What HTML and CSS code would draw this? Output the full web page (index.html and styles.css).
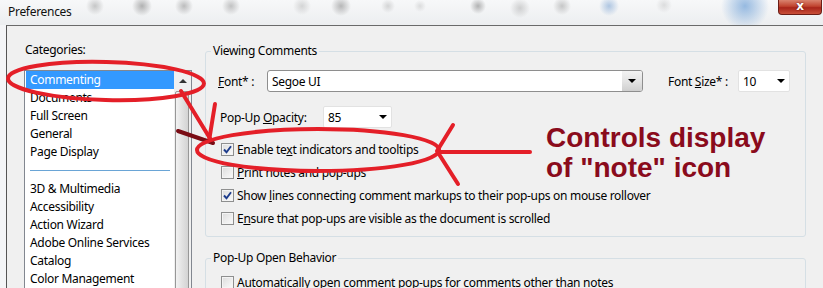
FILE: index.html
```html
<!DOCTYPE html>
<html lang="en">
<head>
    <meta charset="UTF-8">
    <meta name="viewport" content="width=device-width, initial-scale=1.0">
    <title>Preferences</title>
    <link rel="stylesheet" href="styles.css">
</head>
<body>
<div class="window">
    <div class="titlebar">
        <span class="title">Preferences</span>
        <div class="close">x</div>
    </div>

    <div class="dialog">
        <div class="left-pane">
            <div class="cat-label">Categories:</div>
            <div class="listbox">
                <ul class="cat-list">
                    <li class="selected">Commenting</li>
                    <li>Documents</li>
                    <li>Full Screen</li>
                    <li>General</li>
                    <li>Page Display</li>
                    <li class="sep"></li>
                    <li>3D &amp; Multimedia</li>
                    <li>Accessibility</li>
                    <li>Action Wizard</li>
                    <li>Adobe Online Services</li>
                    <li>Catalog</li>
                    <li>Color Management</li>
                </ul>
                <div class="scrollbar">
                    <div class="sb-up"><i class="up-arrow"></i></div>
                    <div class="sb-thumb"></div>
                </div>
            </div>
        </div>

        <div class="right-pane">
            <fieldset class="group">
                <legend>Viewing Comments</legend>
                <div class="row row-font">
                    <label class="lbl lbl-font"><u>F</u>ont* :</label>
                    <div class="combo combo-font">
                        <span class="value">Segoe UI</span>
                        <span class="drop"><i class="arrow"></i></span>
                    </div>
                    <label class="lbl lbl-size">Font <u>S</u>ize* :</label>
                    <div class="combo combo-flat combo-size">
                        <span class="value">10</span>
                        <i class="arrow"></i>
                    </div>
                </div>
                <div class="row row-opacity">
                    <label class="lbl lbl-opacity">Pop-Up <u>O</u>pacity:</label>
                    <div class="combo combo-flat combo-opacity">
                        <span class="value">85</span>
                        <i class="arrow"></i>
                    </div>
                </div>
                <ul class="checks">
                    <li><span class="box"><svg width="9" height="9" viewBox="0 0 9 9"><path d="M1 4.5 L3.5 7.2 L8 1.2" fill="none" stroke="#1d3c8c" stroke-width="1.9"/></svg></span><span>Enable te<u>x</u>t indicators and tooltips</span></li>
                    <li><span class="box"></span><span><u>P</u>rint notes and pop-ups</span></li>
                    <li><span class="box"><svg width="9" height="9" viewBox="0 0 9 9"><path d="M1 4.5 L3.5 7.2 L8 1.2" fill="none" stroke="#1d3c8c" stroke-width="1.9"/></svg></span><span>Show <u>l</u>ines connecting comment markups to their pop-ups on mouse rollover</span></li>
                    <li><span class="box"></span><span>E<u>n</u>sure that pop-ups are visible as the document is scrolled</span></li>
                </ul>
            </fieldset>

            <fieldset class="group group-open">
                <legend>Pop-Up Open Behavior</legend>
                <ul class="checks">
                    <li><span class="box"></span><span><u>A</u>utomatically open comment pop-ups for comments other than notes</span></li>
                </ul>
            </fieldset>
        </div>
    </div>

    <!-- red pen marks drawn over the screenshot -->
    <svg class="marks" width="823" height="288" viewBox="0 0 823 288">
        <ellipse cx="106" cy="81" rx="98" ry="19" fill="none" stroke="#e41f28" stroke-width="4" transform="rotate(1.5 106 81)"/>
        <path d="M181 91 L211 140" fill="none" stroke="#e41f28" stroke-width="4" stroke-linecap="round"/>
        <path d="M215 104 L209 141" fill="none" stroke="#e41f28" stroke-width="4" stroke-linecap="round"/>
        <path d="M178 131 L213 143" fill="none" stroke="#7a0c14" stroke-width="4" stroke-linecap="round"/>
        <ellipse cx="318" cy="150" rx="121" ry="21" fill="none" stroke="#e41f28" stroke-width="4"/>
        <path d="M438 152 L530 152" fill="none" stroke="#e41f28" stroke-width="4" stroke-linecap="round"/>
        <path d="M453 125 L437 151 L458 184" fill="none" stroke="#e41f28" stroke-width="4" stroke-linecap="round" stroke-linejoin="round"/>
    </svg>
    <div class="note">Controls display<br>of "note" icon</div>
</div>
</body>
</html>
```

FILE: styles.css
```css
body, html {
    margin: 0;
    padding: 0;
}

body {
    width: 823px;
    height: 288px;
    overflow: hidden;
    font-family: "Noto Sans", sans-serif;
    font-size: 12px;
    letter-spacing: -0.3px;
    color: #000;
    background: #fff;
}

ul {
    list-style: none;
    margin: 0;
    padding: 0;
}

.window {
    position: relative;
    height: 288px;
    overflow: hidden;
    background: #f4f5f7;
}

/* title bar with the blurred toolbar behind it */
.titlebar {
    height: 25px;
    display: flex;
    align-items: center;
    padding-left: 8px;
    padding-right: 1px;
    background:
        radial-gradient(circle at 95px 6px, rgba(140,140,140,.45), transparent 9px),
        radial-gradient(circle at 142px 6px, rgba(120,120,120,.55), transparent 10px),
        radial-gradient(circle at 184px 6px, rgba(130,130,130,.5), transparent 9px),
        radial-gradient(circle at 231px 6px, rgba(130,130,130,.45), transparent 9px),
        radial-gradient(circle at 302px 6px, rgba(150,150,150,.35), transparent 9px),
        radial-gradient(circle at 341px 6px, rgba(120,120,120,.5), transparent 10px),
        radial-gradient(circle at 388px 6px, rgba(150,150,150,.35), transparent 7px),
        radial-gradient(circle at 420px 6px, rgba(160,160,160,.3), transparent 6px),
        radial-gradient(circle at 478px 6px, rgba(110,110,110,.5), transparent 8px),
        radial-gradient(circle at 520px 8px, rgba(150,150,150,.4), transparent 10px),
        radial-gradient(circle at 562px 6px, rgba(140,140,140,.45), transparent 9px),
        radial-gradient(circle at 609px 6px, rgba(90,140,200,.45), transparent 10px),
        radial-gradient(circle at 664px 5px, rgba(160,160,160,.3), transparent 8px),
        radial-gradient(circle at 745px 6px, rgba(110,160,215,.7), transparent 24px),
        linear-gradient(#f7f8f9, #eceef0);
}

.title {
    font-size: 12px;
    color: #111;
    margin-top: -2px;
}

.close {
    margin-left: auto;
    align-self: flex-start;
    width: 44px;
    height: 15px;
    line-height: 13px;
    text-align: center;
    color: #fff;
    font-family: "DejaVu Sans", sans-serif;
    font-weight: bold;
    font-size: 12px;
    letter-spacing: 0;
    text-shadow: 0 0 2px #5a0f08;
    border: 1px solid #6b1d16;
    border-top: none;
    border-radius: 0 0 4px 4px;
    box-sizing: border-box;
    background: linear-gradient(#d9836f, #c0432f 45%, #a8251a 55%, #c9503a);
}

.dialog {
    display: flex;
    height: 262px;
    margin-left: 6px;
    border-left: 1px solid #555;
    border-top: 1px solid #6a6a6a;
    background: #f0f0f0;
}

/* categories list */
.left-pane {
    padding-left: 17px;
    padding-top: 16px;
}

.cat-label {
    height: 16px;
    line-height: 16px;
    padding-left: 1px;
    margin-bottom: 12px;
}

.listbox {
    display: flex;
    width: 166px;
    height: 240px;
    border: 1px solid #828790;
    background: #fff;
}

.cat-list {
    width: 148px;
    padding-left: 1px;
}

.cat-list li {
    height: 18px;
    line-height: 18px;
    padding-left: 4px;
    white-space: nowrap;
}

.cat-list li.selected {
    background: #3399ff;
    color: #fff;
}

.cat-list li.sep {
    height: 19px;
    position: relative;
}

.cat-list li.sep::after {
    content: "";
    position: absolute;
    left: 4px;
    right: 4px;
    top: 9px;
    border-top: 1px solid #6aa5d6;
}

.scrollbar {
    width: 17px;
    background: #f0f0f0;
    display: flex;
    flex-direction: column;
}

.sb-up {
    height: 19px;
    display: flex;
    align-items: center;
    justify-content: center;
}

.up-arrow {
    width: 0;
    height: 0;
    border-left: 4px solid transparent;
    border-right: 4px solid transparent;
    border-bottom: 4px solid #333;
}

.sb-thumb {
    flex: 1;
    margin: 1px 2px 0 1px;
    border: 1px solid #979797;
    border-radius: 2px;
    background: linear-gradient(90deg, #f2f2f2, #e2e2e2 50%, #d3d3d3);
}

/* right side groups */
.right-pane {
    margin-left: 13px;
    padding-top: 17px;
}

.group {
    width: 575px;
    margin: 0;
    padding: 0 12px 6px 12px;
    border: 1px solid #d5dfe5;
    border-radius: 3px;
}

.group legend {
    line-height: 16px;
    padding: 0 2px;
    margin-left: -7px;
}

.group-open {
    margin-top: 13px;
    padding-top: 5px;
}

.row {
    display: flex;
    align-items: center;
    height: 22px;
}

.row-font {
    margin-top: 11px;
}

.row-opacity {
    margin-top: 14px;
}

.lbl-font {
    width: 49px;
}

.lbl-size {
    width: 70px;
    margin-left: 25px;
}

.lbl-opacity {
    width: 103px;
    padding-left: 2px;
}

.combo {
    height: 22px;
    box-sizing: border-box;
    display: flex;
    align-items: center;
    background: #fff;
}

.combo .value {
    padding-left: 4px;
    flex: 1;
}

.combo-font {
    width: 376px;
    border: 1px solid #8e8e8e;
    border-radius: 3px;
    overflow: hidden;
}

.combo-font .drop {
    width: 20px;
    height: 100%;
    display: flex;
    align-items: center;
    justify-content: center;
    background: linear-gradient(#f3f3f3, #e4e4e4 50%, #cfcfcf);
}

.combo-flat {
    border: 1px solid #e2e2e2;
    border-radius: 2px;
    padding-right: 4px;
}

.combo-size {
    width: 52px;
}

.combo-opacity {
    width: 69px;
}

.arrow {
    width: 0;
    height: 0;
    border-left: 4px solid transparent;
    border-right: 4px solid transparent;
    border-top: 4px solid #000;
}

.checks {
    margin-top: 10px;
}

.group-open .checks {
    margin-top: 0;
}

.checks li {
    height: 23px;
    display: flex;
    align-items: center;
    white-space: nowrap;
}

.box {
    width: 13px;
    height: 13px;
    box-sizing: border-box;
    margin-left: 3px;
    margin-right: 3px;
    border: 1px solid #8e8f8f;
    background: linear-gradient(135deg, #dcdcdc, #fbfbfb);
    box-shadow: inset 0 0 0 1px #f4f4f4;
    display: flex;
    align-items: center;
    justify-content: center;
}

/* pen marks on top */
.marks {
    position: absolute;
    left: 0;
    top: 0;
    pointer-events: none;
}

.note {
    position: absolute;
    left: 546px;
    top: 123px;
    font-family: "Liberation Sans", Arial, sans-serif;
    font-weight: bold;
    font-size: 28px;
    line-height: 30px;
    letter-spacing: 0;
    color: #8a0b1c;
}
```
